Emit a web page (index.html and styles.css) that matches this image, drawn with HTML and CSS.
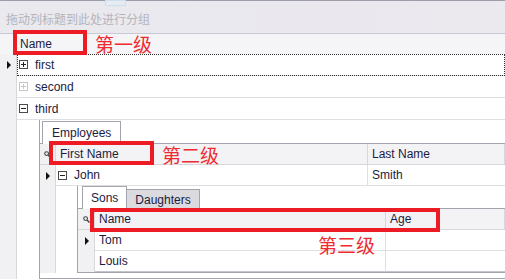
FILE: index.html
```html
<!DOCTYPE html>
<html lang="zh">
<head>
  <meta charset="UTF-8">
  <title>分组表格</title>
  <link rel="stylesheet" href="styles.css">
</head>
<body>
<div class="screen">

  <div class="group-panel">
    拖动列标题到此处进行分组
    <i class="drag-hint"></i>
  </div>

  <div class="hdr">
    <div class="hdr-cell main-name">Name</div>
  </div>

  <div class="row focus">
    <div class="ind"><span class="arrow"></span></div>
    <div class="cell"><span class="exp plus"></span>first</div>
  </div>
  <div class="row">
    <div class="ind"></div>
    <div class="cell"><span class="exp plus off"></span>second</div>
  </div>
  <div class="row">
    <div class="ind"></div>
    <div class="cell"><span class="exp minus"></span>third</div>
  </div>

  <!-- 第二级：Employees -->
  <div class="detail-row">
    <div class="ind"></div>
    <div class="detail-wrap">
      <div class="detail lvl2">
        <div class="tabs">
          <div class="tab active">Employees</div>
        </div>

        <div class="sub-hdr">
          <div class="ind sm"><svg width="7" height="7" viewBox="0 0 7 7"><circle cx="2.6" cy="2.6" r="1.9" fill="none" stroke="#444" stroke-width="1.1"/><path d="M4 4L6.5 6.5" stroke="#444" stroke-width="1.4"/></svg></div>
          <div class="hdr-cell col-first">First Name</div>
          <div class="hdr-cell col-last">Last Name</div>
        </div>
        <div class="sub-row">
          <div class="ind sm"><span class="arrow"></span></div>
          <div class="cell col-first"><span class="exp minus"></span>John</div>
          <div class="cell col-last">Smith</div>
        </div>

        <!-- 第三级：Sons / Daughters -->
        <div class="detail-row">
          <div class="ind sm"></div>
          <div class="detail-wrap inner">
            <div class="detail lvl3">
              <div class="tabs small">
                <div class="tab active">Sons</div>
                <div class="tab">Daughters</div>
              </div>
              <div class="sub-hdr">
                <div class="ind"><svg width="7" height="7" viewBox="0 0 7 7"><circle cx="2.6" cy="2.6" r="1.9" fill="none" stroke="#444" stroke-width="1.1"/><path d="M4 4L6.5 6.5" stroke="#444" stroke-width="1.4"/></svg></div>
                <div class="hdr-cell col-name">Name</div>
                <div class="hdr-cell col-age">Age</div>
              </div>
              <div class="sub-row">
                <div class="ind"><span class="arrow"></span></div>
                <div class="cell col-name">Tom</div>
                <div class="cell col-age"></div>
              </div>
              <div class="sub-row">
                <div class="ind"></div>
                <div class="cell col-name">Louis</div>
                <div class="cell col-age"></div>
              </div>
            </div>
          </div>
        </div>

      </div>
    </div>
  </div>

  <!-- 标注 -->
  <div class="mark mark1"></div>
  <div class="note note1">第一级</div>
  <div class="mark mark2"></div>
  <div class="note note2">第二级</div>
  <div class="mark mark3"></div>
  <div class="note note3">第三级</div>

</div>
</body>
</html>
```

FILE: styles.css
```css
* {
  box-sizing: border-box;
}

body {
  margin: 0;
  font-family: "Liberation Sans", Arial, sans-serif;
  font-size: 12px;
  color: #1c1c40;
  background: #fff;
}

.screen {
  position: relative;
  width: 505px;
  height: 280px;
  overflow: hidden;
}

/* 分组面板 */
.group-panel {
  position: relative;
  height: 34px;
  border-top: 1px solid #9d9da9;
  border-bottom: 1px solid #c9c9d5;
  background: linear-gradient(90deg, #e9e9ee, #ebe8ee);
  color: #b4b4bc;
  font-family: "Noto Sans CJK SC", sans-serif;
  font-size: 12px;
  line-height: 17px;
  padding: 9px 0 0 6px;
}

.drag-hint {
  position: absolute;
  left: 105px;
  top: -1px;
  width: 21px;
  height: 6px;
  border: 1px solid #cfdcec;
  background: #e6ecf4;
}

/* 表头 */
.hdr {
  height: 20px;
  background: #f5f5f7;
  display: flex;
  align-items: center;
}

.main-name {
  padding-left: 20px;
}

/* 行 */
.row {
  display: flex;
  height: 22px;
}

.ind {
  width: 17px;
  flex: none;
  background: #f1f1f4;
  border-right: 1px solid #d8d8de;
  display: flex;
  align-items: center;
  justify-content: center;
}

.ind.sm {
  width: 16px;
}

.cell {
  flex: 1;
  display: flex;
  align-items: center;
  padding-left: 2px;
  border-bottom: 1px solid #dedee3;
}

.row.focus .cell {
  outline: 1px dotted #333;
  outline-offset: -1px;
}

.arrow {
  width: 0;
  height: 0;
  border-left: 4px solid #111;
  border-top: 4px solid transparent;
  border-bottom: 4px solid transparent;
  margin-left: 1px;
}

/* 展开按钮 */
.exp {
  position: relative;
  flex: none;
  width: 9px;
  height: 9px;
  border: 1px solid #4a4a4a;
  margin-right: 7px;
}

.exp::before,
.exp::after {
  content: "";
  position: absolute;
  background: #222;
}

.exp::before {
  left: 1px;
  top: 3px;
  width: 5px;
  height: 1px;
}

.plus::after {
  left: 3px;
  top: 1px;
  width: 1px;
  height: 5px;
}

.exp.off {
  border-color: #c6c6c6;
}

.exp.off::before,
.exp.off::after {
  background: #c6c6c6;
}

/* 明细 */
.detail-row {
  display: flex;
}

.detail-wrap {
  flex: 1;
  padding-left: 22px;
}

.detail-wrap.inner {
  padding-left: 21px;
}

.detail {
  border-left: 1px solid #a4a4ae;
  border-bottom: 1px solid #a4a4ae;
}

.lvl2 {
  padding-bottom: 5px;
}

.tabs {
  display: flex;
  align-items: flex-end;
  height: 24px;
  padding-left: 2px;
  border-bottom: 1px solid #a4a4ae;
}

.tabs.small {
  height: 23px;
  padding-left: 4px;
}

.tab {
  height: 19px;
  padding: 0 8px;
  border: 1px solid #a4a4ae;
  border-bottom: none;
  background: #dadadf;
  display: flex;
  align-items: center;
  margin-bottom: -1px;
  line-height: 1;
}

.tab + .tab {
  margin-left: -1px;
  height: 20px;
}

.tab.active {
  height: 23px;
  padding: 0 9px;
  background: #fff;
}

.tabs.small .tab.active {
  height: 23px;
  padding: 0 8px;
}

.sub-hdr,
.sub-row {
  display: flex;
  height: 21px;
}

.sub-hdr {
  background: #f3f3f5;
  border-bottom: 1px solid #d6d6dc;
}

.sub-row {
  height: 21px;
}

.hdr-cell {
  display: flex;
  align-items: center;
}

.sub-hdr .hdr-cell {
  padding-left: 4px;
  border-right: 1px solid #d6d6dc;
}

.sub-row .cell {
  padding-left: 4px;
}

.col-first {
  flex: none;
  width: 312px;
  border-right: 1px solid #dedee3;
}

.sub-row .col-first {
  padding-left: 2px;
}

.col-last {
  flex: 1;
}

.col-name {
  flex: none;
  width: 291px;
  border-right: 1px solid #dedee3;
}

.col-age {
  flex: 1;
}

.lvl3 .sub-row:last-child .cell {
  border-bottom-color: #c4c4cc;
}

/* 红色标注 */
.mark {
  position: absolute;
  border: 4px solid #ed1c24;
}

.mark1 {
  left: 13px;
  top: 30px;
  width: 74px;
  height: 25px;
}

.mark2 {
  left: 49px;
  top: 141px;
  width: 105px;
  height: 24px;
}

.mark3 {
  left: 90px;
  top: 208px;
  width: 350px;
  height: 24px;
}

.note {
  position: absolute;
  color: #ef2a30;
  font-family: "Noto Sans CJK SC", sans-serif;
  font-size: 19px;
  line-height: 19px;
}

.note1 {
  left: 95px;
  top: 34px;
}

.note2 {
  left: 162px;
  top: 145px;
}

.note3 {
  left: 318px;
  top: 235px;
}
```
